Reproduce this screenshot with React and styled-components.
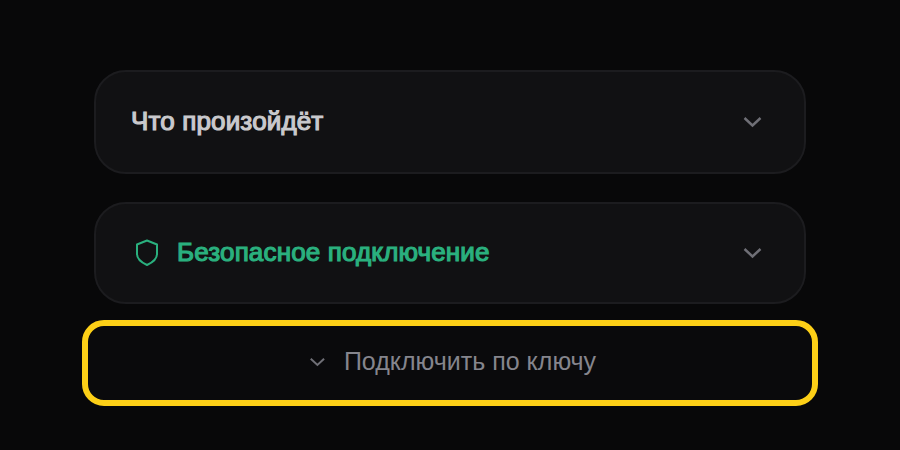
import React from 'react';
import styled, { createGlobalStyle } from 'styled-components';

const Global = createGlobalStyle`
  html, body {
    margin: 0;
    height: 100%;
    background: #080809;
  }
  body {
    font-family: "Liberation Sans", Arial, sans-serif;
  }
`;

const Page = styled.main`
  width: 900px;
  height: 450px;
  padding-top: 70px;
  box-sizing: border-box;
  display: flex;
  flex-direction: column;
  align-items: center;
  overflow: hidden;
`;

const Card = styled.section`
  box-sizing: border-box;
  width: 712px;
  height: ${props => props.$height}px;
  margin-bottom: ${props => props.$gap}px;
  padding: 0 40px 0 35px;
  display: flex;
  align-items: center;
  justify-content: space-between;
  background: #111113;
  border: 2px solid #1c1c1f;
  border-radius: 32px;
`;

const Heading = styled.div`
  display: flex;
  align-items: center;
  gap: 18px;
`;

const Title = styled.h3`
  margin: 0 0 2px;
  font-size: 26px;
  font-weight: 400;
  letter-spacing: 0.15px;
  -webkit-text-stroke: 1.2px currentColor;
  color: ${props => props.$color};
`;

const KeyButton = styled.button`
  box-sizing: border-box;
  width: 736px;
  height: 86px;
  display: flex;
  align-items: center;
  justify-content: center;
  gap: 17px;
  padding: 0 0 3px 3px;
  background: #0a0a0c;
  border: 6px solid #fdd017;
  border-radius: 22px;
  font-family: inherit;
  font-size: 25px;
  color: #85858d;
`;

const ShieldIcon = styled.svg`
  margin-left: 4px;
  flex: none;
`;

const Chevron = ({ size = 24, color = '#6f6f76' }) => (
  <svg width={size} height={size} viewBox="0 0 24 24" fill="none" stroke={color} strokeWidth="2.4">
    <path d="M4.5 8 12.5 15.5 20.5 8" />
  </svg>
);

const Shield = () => (
  <ShieldIcon width="24" height="30" viewBox="0 0 24 30" fill="none" stroke="#2ab07e" strokeWidth="2" strokeLinejoin="round">
    <path d="M12 2.5 L22 6.5 V16 C22 21 17.5 24.5 12 27 C6.5 24.5 2 21 2 16 V6.5 Z" />
  </ShieldIcon>
);

const App = () => (
  <Page>
    <Global />
    <Card $height={104} $gap={28}>
      <Heading>
        <Title $color="#c9c9cc">Что произойдёт</Title>
      </Heading>
      <Chevron />
    </Card>
    <Card $height={102} $gap={16}>
      <Heading>
        <Shield />
        <Title $color="#2ab07e">Безопасное подключение</Title>
      </Heading>
      <Chevron />
    </Card>
    <KeyButton>
      <Chevron size={20} />
      Подключить по ключу
    </KeyButton>
  </Page>
);

export default App;
